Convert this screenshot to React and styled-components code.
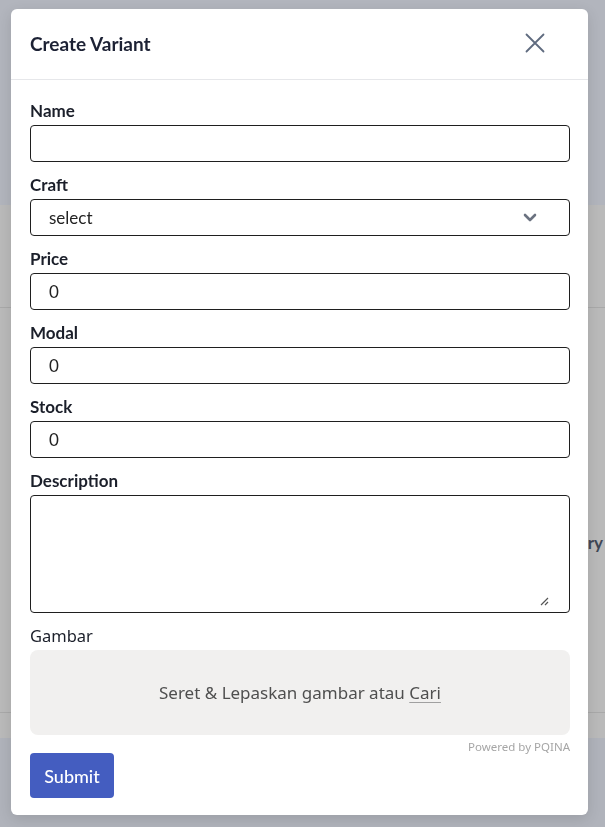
import styled, { createGlobalStyle } from "styled-components";

const Global = createGlobalStyle`
  html, body {
    margin: 0;
    padding: 0;
    background: #b1b4bc;
    font-family: "Lato", "Noto Sans", sans-serif;
  }
  * { box-sizing: border-box; }
`;

const Page = styled.div`
  width: 605px;
  height: 827px;
  overflow: hidden;
  background: #b0b3bb;
`;

const TopBand = styled.div`
  height: 205px;
  background: #b2b5bd;
`;

const Card = styled.div`
  height: 533px;
  background: #bababa;
  display: flex;
  flex-direction: column;
`;

const CardRow = styled.div`
  height: ${(p) => p.h}px;
  padding-top: ${(p) => p.top || 0}px;
  border-bottom: ${(p) => (p.line ? "1px solid #a9a9a9" : "none")};
  display: flex;
  align-items: flex-start;
  justify-content: flex-end;
  padding-right: 2px;
  color: #3f4756;
  font-weight: 700;
  font-size: 17px;
`;

const Overlay = styled.div`
  position: fixed;
  inset: 0;
  padding: 9px 0 0 11px;
`;

const Modal = styled.div`
  width: 577px;
  background: #fff;
  border-radius: 6px;
  box-shadow: 0 4px 14px rgba(0, 0, 0, 0.12);
`;

const Header = styled.div`
  height: 71px;
  padding: 2px 42px 4px 19px;
  display: flex;
  align-items: center;
  justify-content: space-between;
  border-bottom: 1px solid #e6e7ea;
`;

const Title = styled.h2`
  margin: 0;
  font-size: 19px;
  font-weight: 700;
  color: #1c2134;
`;

const Close = styled.button`
  border: none;
  background: none;
  padding: 0;
  width: 22px;
  height: 22px;
  display: flex;
  align-items: center;
  justify-content: center;
  color: #5f6b7f;
`;

const Body = styled.div`
  padding: 20px 18px 17px 19px;
`;

const Field = styled.div`
  margin-bottom: 12px;
`;

const Label = styled.label`
  display: block;
  height: 22px;
  line-height: 22px;
  margin-bottom: 3px;
  font-size: ${(p) => (p.plain ? 16.5 : 17)}px;
  font-weight: ${(p) => (p.plain ? 400 : 700)};
  font-family: ${(p) => (p.plain ? '"Noto Sans", sans-serif' : "inherit")};
  color: #1b1f2a;
`;

const Input = styled.div`
  height: ${(p) => p.h || 37}px;
  border: 1px solid #1f1f1f;
  border-radius: 4px;
  padding: 0 32px 0 18px;
  display: flex;
  align-items: center;
  justify-content: space-between;
  font-size: 17px;
  color: #222;
  position: relative;
`;

const Grip = styled.svg`
  position: absolute;
  right: 20px;
  bottom: 6px;
`;

const Drop = styled.div`
  height: 85px;
  background: #f1f0ef;
  border-radius: 8px;
  display: flex;
  align-items: center;
  justify-content: center;
  font-family: "Noto Sans", sans-serif;
  font-size: 17px;
  color: #4f4f4f;
  u {
    text-decoration-color: #a0a0a0;
    text-underline-offset: 3px;
  }
`;

const Credits = styled.div`
  text-align: right;
  margin-top: 6px;
  height: 12px;
  line-height: 12px;
  font-family: "Noto Sans", sans-serif;
  font-size: 11.5px;
  color: #a6a6a6;
`;

const Submit = styled.button`
  display: block;
  width: 84px;
  height: 45px;
  border: none;
  border-radius: 4px;
  background: #445dc0;
  color: #fff;
  font-family: inherit;
  font-size: 18px;
  font-weight: 500;
`;

const fields = [
  { label: "Name" },
  { label: "Craft", value: "select", select: true },
  { label: "Price", value: "0" },
  { label: "Modal", value: "0" },
  { label: "Stock", value: "0" },
];

const App = () => {
  return (
    <>
      <Global />
      <Page>
        <TopBand />
        <Card>
          <CardRow h={103} line />
          <CardRow h={405} top={224} line>
            Category
          </CardRow>
          <CardRow h={25} />
        </Card>
      </Page>
      <Overlay>
        <Modal>
          <Header>
            <Title>Create Variant</Title>
            <Close>
              <svg width="20" height="20" viewBox="0 0 20 20" fill="none" stroke="currentColor" strokeWidth="1.8" strokeLinecap="round">
                <path d="M1.5 1.5l17 17M18.5 1.5l-17 17" />
              </svg>
            </Close>
          </Header>
          <Body>
            {fields.map((f) => (
              <Field key={f.label}>
                <Label>{f.label}</Label>
                <Input>
                  <span>{f.value}</span>
                  {f.select && (
                    <svg width="14" height="9" viewBox="0 0 14 9" fill="none" stroke="#6b7280" strokeWidth="2.6" strokeLinecap="round" strokeLinejoin="round">
                      <path d="M2 2l5 5 5-5" />
                    </svg>
                  )}
                </Input>
              </Field>
            ))}
            <Field>
              <Label>Description</Label>
              <Input h={118}>
                <Grip width="9" height="9" viewBox="0 0 9 9" stroke="#555" strokeWidth="1.2">
                  <path d="M8 1L1 8M8 5L5 8" />
                </Grip>
              </Input>
            </Field>
            <Label plain>Gambar</Label>
            <Drop>
              <span>
                Seret &amp; Lepaskan gambar atau <u>Cari</u>
              </span>
            </Drop>
            <Credits>Powered by PQINA</Credits>
            <Submit>Submit</Submit>
          </Body>
        </Modal>
      </Overlay>
    </>
  );
};

export default App;
